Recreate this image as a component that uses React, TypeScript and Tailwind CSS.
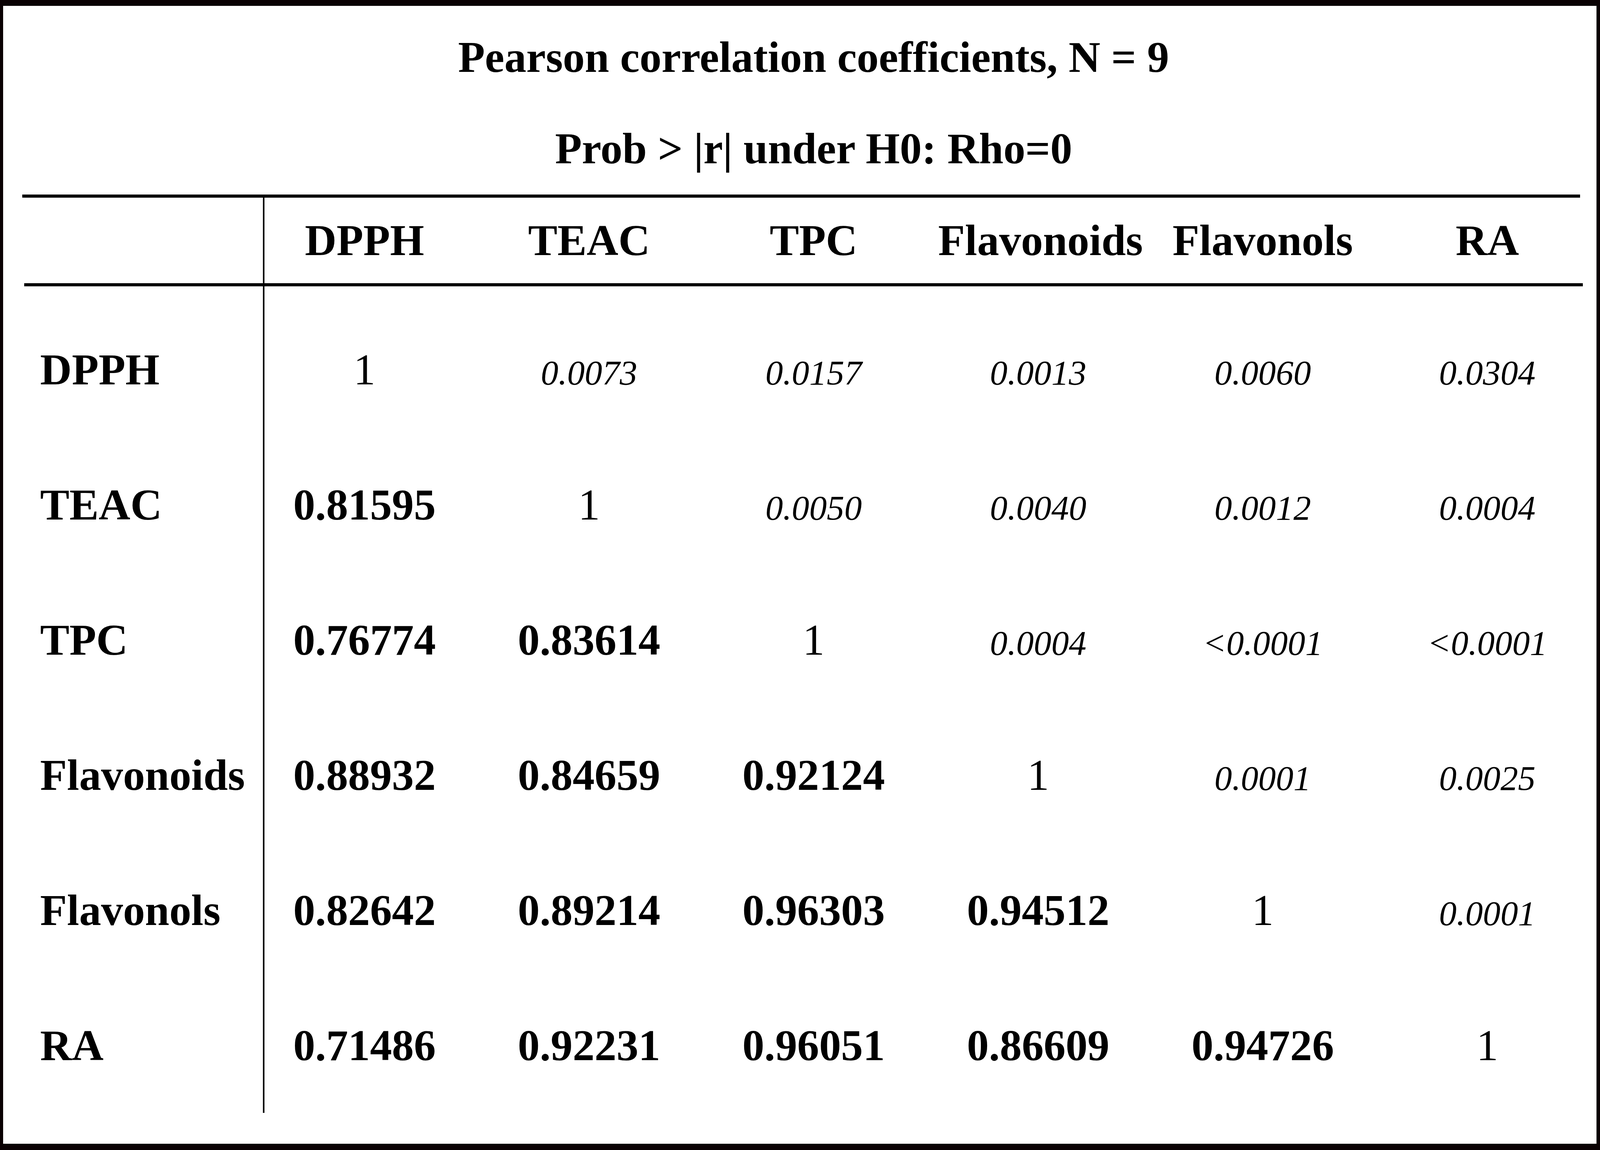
const cols = ['DPPH', 'TEAC', 'TPC', 'Flavonoids', 'Flavonols', 'RA'];

const rows: [string, string[]][] = [
  ['DPPH', ['1', '0.0073', '0.0157', '0.0013', '0.0060', '0.0304']],
  ['TEAC', ['0.81595', '1', '0.0050', '0.0040', '0.0012', '0.0004']],
  ['TPC', ['0.76774', '0.83614', '1', '0.0004', '<0.0001', '<0.0001']],
  ['Flavonoids', ['0.88932', '0.84659', '0.92124', '1', '0.0001', '0.0025']],
  ['Flavonols', ['0.82642', '0.89214', '0.96303', '0.94512', '1', '0.0001']],
  ['RA', ['0.71486', '0.92231', '0.96051', '0.86609', '0.94726', '1']],
];

// sizes follow the frame: widths in vw, heights in vh
// below the diagonal: r (bold), diagonal: 1, above: p-value (italic)
function Cell({ value, kind }: { value: string; kind: 'r' | 'one' | 'p' }) {
  return (
    <div className="flex h-[11.753vh] items-center justify-center pr-[1.535vw]">
      <div className="text-[2.7412vw] leading-[1.105]">
        {kind === 'r' && <span className="font-bold">{value}</span>}
        {kind === 'one' && <span>{value}</span>}
        {kind === 'p' && <span className="text-[2.193vw] italic leading-none">{value}</span>}
      </div>
    </div>
  );
}

export default function App() {
  return (
    <div className="h-screen w-screen overflow-hidden border-t-[0.51vh] border-r-[0.233vw] border-b-[0.577vh] border-l-[0.2056vw] border-[#0a0103] bg-white pl-[1.1924vw] text-black [font-family:'Liberation_Serif','Times_New_Roman',serif]">
      <div className="w-[98.93vw] pt-[0.51vh] text-center text-[2.7412vw] leading-[7.948vh] font-bold">
        <div>Pearson correlation coefficients, N = 9</div>
        <div>Prob &gt; |r| under H0: Rho=0</div>
      </div>

      <div className="h-[0.272vh] w-[97.368vw] bg-black" />

      <div className="flex h-[7.439vh]">
        <div className="w-[15.145vw] shrink-0 border-r-[0.1096vw] border-black" />
        <div className="grid shrink-0 grid-cols-[repeat(6,14.035vw)] text-[2.7412vw] leading-[7.439vh] font-bold">
          {cols.map((c) => (
            <div key={c} className="pr-[1.535vw] text-center">
              {c}
            </div>
          ))}
        </div>
      </div>

      <div className="ml-[0.137vw] h-[0.272vh] w-[97.396vw] bg-black" />

      <div className="flex">
        <div className="w-[15.145vw] shrink-0 border-r-[0.1096vw] border-black pt-[1.359vh]">
          {rows.map(([label]) => (
            <div key={label} className="flex h-[11.753vh] items-center pl-[1.124vw]">
              <div className="text-[2.7412vw] leading-[1.105] font-bold">{label}</div>
            </div>
          ))}
        </div>
        <div className="grid shrink-0 grid-cols-[repeat(6,14.035vw)] pt-[1.359vh]">
          {rows.map(([label, vals], i) =>
            vals.map((v, j) => (
              <Cell key={label + j} value={v} kind={j < i ? 'r' : j === i ? 'one' : 'p'} />
            ))
          )}
        </div>
      </div>
    </div>
  );
}
